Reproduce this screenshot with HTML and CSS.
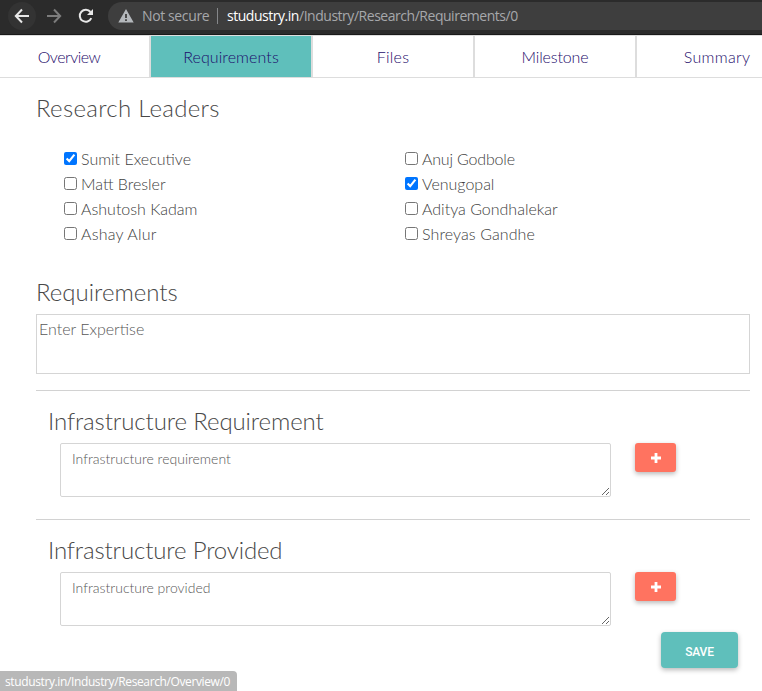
FILE: index.html
```
<!DOCTYPE html>
<html lang="en">
<head>
<meta charset="utf-8">
<title>Requirements</title>
<link rel="stylesheet" href="styles.css">
</head>
<body>
<header class="browser">
  <span class="nav back"><svg width="16" height="16" viewBox="0 0 16 16"><path d="M15 8H2M8 1.5 1.8 8 8 14.5"/></svg></span>
  <span class="nav forward"><svg width="16" height="16" viewBox="0 0 16 16"><path d="M1 8h13M8 1.5 14.2 8 8 14.5"/></svg></span>
  <span class="nav reload"><svg width="16" height="16" viewBox="0 0 16 16"><path d="M13.3 10.2A6 6 0 1 1 12.5 4"/><path class="solid" d="M15 1v6H9z"/></svg></span>
  <div class="address">
    <svg class="warn" width="16" height="14" viewBox="0 0 16 14"><path fill-rule="evenodd" d="M8 0l7.7 13.5H.3zM7.1 5v4h1.8V5zm0 5.2V12h1.8v-1.8z"/></svg>
    <span class="insecure">Not secure</span>
    <span class="divider"></span>
    <span class="url"><b>studustry.in</b>/Industry/Research/Requirements/0</span>
  </div>
</header>
<nav class="tabs">
  <a class="tab"><span class="t1">Overview</span></a>
  <a class="tab active"><span class="t2">Requirements</span></a>
  <a class="tab"><span class="t3">Files</span></a>
  <a class="tab"><span class="t4">Milestone</span></a>
  <a class="tab"><span class="t5">Summary</span></a>
</nav>
<main>
  <h2 class="h-leaders">Research Leaders</h2>
  <div class="leaders">
    <label><input type="checkbox" checked><span class="n1">Sumit Executive</span></label>
    <label><input type="checkbox"><span class="n2">Anuj Godbole</span></label>
    <label><input type="checkbox"><span class="n3">Matt Bresler</span></label>
    <label><input type="checkbox" checked><span class="n4">Venugopal</span></label>
    <label><input type="checkbox"><span class="n5">Ashutosh Kadam</span></label>
    <label><input type="checkbox"><span class="n6">Aditya Gondhalekar</span></label>
    <label><input type="checkbox"><span class="n7">Ashay Alur</span></label>
    <label><input type="checkbox"><span class="n8">Shreyas Gandhe</span></label>
  </div>
  <h2 class="h-req">Requirements</h2>
  <textarea class="expertise" placeholder="Enter Expertise"></textarea>
  <section class="infra">
    <h2 class="h-ireq">Infrastructure Requirement</h2>
    <div class="row">
      <textarea class="p-req" placeholder="Infrastructure requirement"></textarea>
      <button class="add"><svg width="10" height="10" viewBox="0 0 10 10"><path d="M3.6 0h2.8v3.6H10v2.8H6.4V10H3.6V6.4H0V3.6h3.6z"/></svg></button>
    </div>
  </section>
  <section class="infra">
    <h2 class="h-iprov">Infrastructure Provided</h2>
    <div class="row">
      <textarea class="p-prov" placeholder="Infrastructure provided"></textarea>
      <button class="add"><svg width="10" height="10" viewBox="0 0 10 10"><path d="M3.6 0h2.8v3.6H10v2.8H6.4V10H3.6V6.4H0V3.6h3.6z"/></svg></button>
    </div>
  </section>
  <button class="save">SAVE</button>
</main>
<div class="status">studustry.in/Industry/Research/Overview/0</div>
</body>
</html>
```
FILE: styles.css
```
* { box-sizing: border-box; }
body {
  margin: 0;
  width: 762px;
  height: 691px;
  overflow: hidden;
  position: relative;
  background: #fff;
  color: #484848;
  font-family: Lato, sans-serif;
  font-weight: 300;
}
.browser {
  display: flex;
  align-items: center;
  height: 35px;
  padding: 0 0 3px 8px;
  background: #2b2b2b;
  border-bottom: 1px solid #191919;
}
.nav {
  display: flex;
  align-items: center;
  justify-content: center;
  width: 28px;
  height: 28px;
  margin-right: 4px;
  border-radius: 50%;
}
.nav svg { fill: none; stroke: #e8e8e8; stroke-width: 2; }
.nav .solid { fill: #e8e8e8; stroke: none; }
.back { background: #333; }
.forward svg { stroke: #7c7c7c; }
.address {
  display: flex;
  align-items: center;
  flex: 1;
  height: 28px;
  margin-left: 4px;
  padding-left: 10px;
  background: #3e3e3e;
  border-radius: 14px 0 0 14px;
  font: 14px "Open Sans", sans-serif;
  color: #a6a8ab;
  white-space: nowrap;
}
.warn { fill: #b4b8bc; }
.insecure { width: 75px; margin-left: 8px; letter-spacing: -0.38px; }
.divider { width: 1px; height: 16px; background: #85878a; }
.url { margin-left: 9px; letter-spacing: -0.47px; }
.url b { font-weight: 400; color: #fff; }
.tabs {
  display: flex;
  height: 43px;
  margin-left: -11px;
  border-top: 1px solid #ddd;
  border-bottom: 1px solid #ddd;
}
.tab {
  flex: 0 0 162px;
  display: flex;
  align-items: center;
  justify-content: center;
  border-right: 2px solid #ddd;
  color: #1d0c6b;
  font-size: 16px;
}
.tab.active { background: #5fbfbb; }
.t1 { letter-spacing: -0.5px; }
.t2 { letter-spacing: 0.1px; }
.t3 { letter-spacing: 0.3px; }
.t4 { letter-spacing: -0.15px; }
.t5 { letter-spacing: 0.3px; }
main { padding: 0 12px 0 36px; }
h2 {
  margin: 0;
  height: 30px;
  line-height: 28px;
  font-size: 24px;
  font-weight: 300;
  white-space: nowrap;
}
.h-leaders { margin-top: 16px; letter-spacing: 0.3px; }
.h-ireq { letter-spacing: -0.1px; }
.h-iprov { letter-spacing: -0.14px; }
.leaders {
  display: grid;
  grid-template-columns: 341px 1fr;
  grid-auto-rows: 25px;
  margin: 23px 0 31px 28px;
}
.leaders label {
  display: flex;
  align-items: center;
  font-size: 16px;
  color: #404040;
  white-space: nowrap;
}
.leaders span { margin-top: -2px; }
.leaders input { width: 13px; height: 13px; margin: 0 4px 2px 0; }
.n2 { letter-spacing: -0.18px; }
.n7 { letter-spacing: 0.2px; }
.n8 { letter-spacing: 0.1px; }
textarea {
  display: block;
  margin: 0;
  border: 1px solid #d5d5d5;
  outline: 0;
  font-family: Lato, sans-serif;
  font-size: 14px;
  font-weight: 300;
  line-height: 20px;
  color: #555;
}
textarea::placeholder { color: #585858; }
.expertise {
  width: 714px;
  height: 60px;
  margin: 6px 0 16px;
  padding: 4px 2px;
  font-size: 16px;
  resize: none;
}
.infra {
  height: 129px;
  padding: 16px 12px 0;
  border-top: 1px solid #d2d2d2;
}
.row { display: flex; align-items: flex-start; gap: 24px; margin: 6px 0 0 12px; }
.row textarea {
  width: 551px;
  height: 54px;
  padding: 5px 11px;
  border-radius: 2px;
}
button { border: 0; box-shadow: 0 2px 5px rgba(0, 0, 0, .28); }
.add {
  display: flex;
  align-items: center;
  justify-content: center;
  width: 41px;
  height: 29px;
  padding: 0;
  border-radius: 3px;
  background: #ff7360;
}
.add svg { fill: #fff; }
.save {
  display: block;
  width: 77px;
  height: 36px;
  margin: -16px 12px 0 auto;
  padding: 3px 0 0;
  border-radius: 4px;
  background: #5fbfbb;
  color: #fff;
  font: 500 12px Roboto, sans-serif;
  letter-spacing: -0.2px;
}
.status {
  position: absolute;
  left: 0;
  bottom: 0;
  width: 237px;
  height: 20px;
  padding-left: 5px;
  border-radius: 0 4px 0 0;
  background: #b8b8b8;
  color: #fff;
  font: 12px/21px "Open Sans", sans-serif;
  letter-spacing: -0.38px;
  white-space: nowrap;
}
```
